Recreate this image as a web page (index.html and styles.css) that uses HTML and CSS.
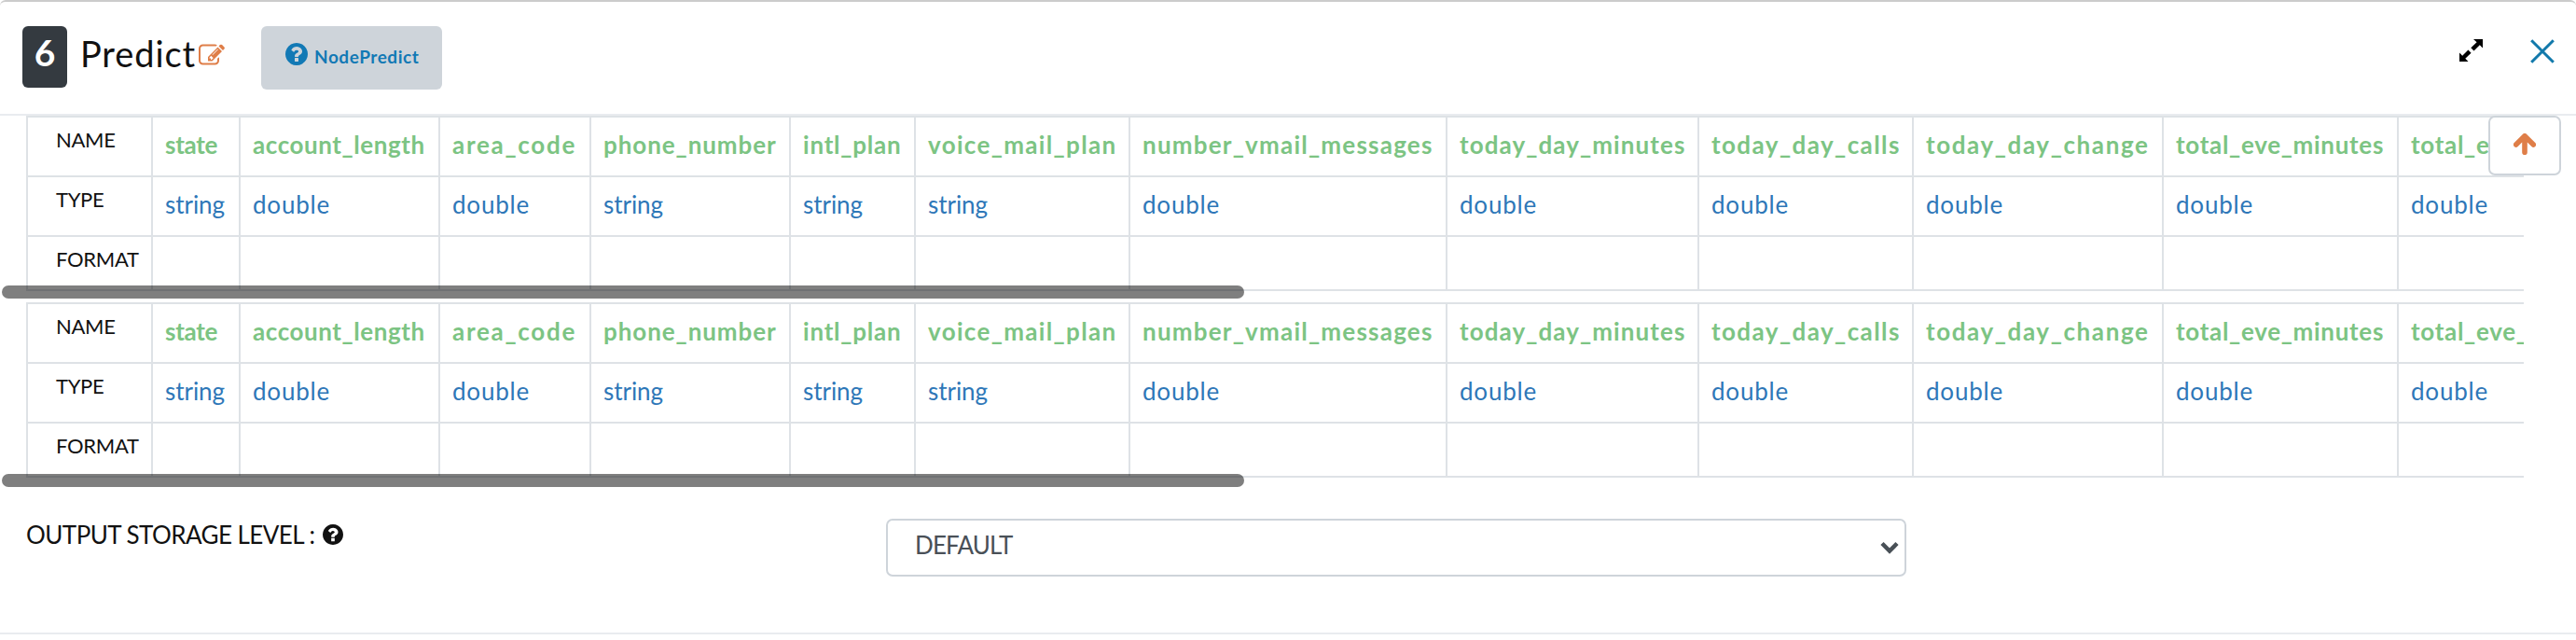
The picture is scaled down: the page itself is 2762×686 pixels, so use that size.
FILE: index.html
```html
<!DOCTYPE html>
<html lang="en">
<head>
<meta charset="utf-8">
<title>Predict</title>
<link rel="stylesheet" href="styles.css">
</head>
<body>
<svg class="defs" width="0" height="0">
  <symbol id="question" viewBox="128 128 1536 1536"><path d="M1024 1376v-192q0-14-9-23t-23-9h-192q-14 0-23 9t-9 23v192q0 14 9 23t23 9h192q14 0 23-9t9-23zm256-672q0-88-55.500-163t-138.500-116-170-41q-243 0-371 213-15 24 8 42l132 100q7 6 19 6 16 0 25-12 53-68 86-92 34-24 86-24 48 0 85.500 26t37.500 59q0 38-20 61t-68 45q-63 28-115.500 86.500t-52.500 125.500v36q0 14 9 23t23 9h192q14 0 23-9t9-23q0-19 21.500-49.500t54.500-49.500q32-18 49-28.500t46-35 44.500-48 28-60.500 12.500-81zm384 192q0 209-103 385.500t-279.500 279.500-385.500 103-385.500-103-279.500-279.500-103-385.500 103-385.500 279.500-279.500 385.500-103 385.500 103 279.500 279.500 103 385.500z"/></symbol>
</svg>
<div class="panel">
  <header class="head">
    <span class="badge">6</span>
    <h1 class="title">Predict</h1>
    <svg class="edit" viewBox="0 112 1792 1440"><path d="M888 1184l116-116-152-152-116 116v56h96v96h56zm440-720q-16-16-33 1l-350 350q-17 17-1 33t33-1l350-350q17-17 1-33zm80 594v190q0 119-84.500 203.500t-203.500 84.500h-832q-119 0-203.500-84.500t-84.500-203.500v-832q0-119 84.500-203.500t203.500-84.500h832q63 0 117 25 15 7 18 23 3 17-9 29l-49 49q-14 14-32 8-23-6-45-6h-832q-66 0-113 47t-47 113v832q0 66 47 113t113 47h832q66 0 113-47t47-113v-126q0-13 9-22l64-64q15-15 35-7t20 29zm-96-738l288 288-672 672h-288v-288zm444 132l-92 92-288-288 92-92q28-28 68-28t68 28l152 152q28 28 28 68t-28 68z"/></svg>
    <a class="node"><svg class="node-icon"><use href="#question"/></svg><span class="node-label">NodePredict</span></a>
    <svg class="expand" viewBox="0 0 25 24"><path d="M15 0h10v9.500l-3.200-3.200-6.300 6.100-3.200-3.200 6.300-6zM0 24v-9.500l3.200 3.200 6.200-6.100 3.200 3.200-6.300 6 3.200 3.200z"/></svg>
    <svg class="close" viewBox="0 0 26 26"><path d="M1.200 1.200l23.600 23.600M24.800 1.200L1.200 24.800"/></svg>
  </header>

  <main class="body">
    <button class="up" type="button"><svg viewBox="0 0 24 23"><path d="M12 20.200V3.500M2.700 12L12 2.800 21.300 12"/></svg></button>

    <section class="schema">
      <div class="clip">
        <table>
          <colgroup><col class="w134"><col class="w94"><col class="w214"><col class="w162"><col class="w214"><col class="w134"><col class="w230"><col class="w340"><col class="w270"><col class="w230"><col class="w268"><col class="w252"><col class="w254"></colgroup>
          <tr class="names"><th>NAME</th><td class="n1">state</td><td class="n2">account_length</td><td class="n3">area_code</td><td class="n4">phone_number</td><td class="n5">intl_plan</td><td class="n6">voice_mail_plan</td><td class="n7">number_vmail_messages</td><td class="n8">today_day_minutes</td><td class="n9">today_day_calls</td><td class="n10">today_day_change</td><td class="n11">total_eve_minutes</td><td class="n11">total_eve_calls</td></tr>
          <tr class="types"><th>TYPE</th><td class="s">string</td><td>double</td><td>double</td><td class="s">string</td><td class="s">string</td><td class="s">string</td><td>double</td><td>double</td><td>double</td><td>double</td><td>double</td><td>double</td></tr>
          <tr class="formats"><th>FORMAT</th><td></td><td></td><td></td><td></td><td></td><td></td><td></td><td></td><td></td><td></td><td></td><td></td></tr>
        </table>
      </div>
      <div class="scroll"></div>
    </section>

    <section class="schema">
      <div class="clip">
        <table>
          <colgroup><col class="w134"><col class="w94"><col class="w214"><col class="w162"><col class="w214"><col class="w134"><col class="w230"><col class="w340"><col class="w270"><col class="w230"><col class="w268"><col class="w252"><col class="w254"></colgroup>
          <tr class="names"><th>NAME</th><td class="n1">state</td><td class="n2">account_length</td><td class="n3">area_code</td><td class="n4">phone_number</td><td class="n5">intl_plan</td><td class="n6">voice_mail_plan</td><td class="n7">number_vmail_messages</td><td class="n8">today_day_minutes</td><td class="n9">today_day_calls</td><td class="n10">today_day_change</td><td class="n11">total_eve_minutes</td><td class="n11">total_eve_calls</td></tr>
          <tr class="types"><th>TYPE</th><td class="s">string</td><td>double</td><td>double</td><td class="s">string</td><td class="s">string</td><td class="s">string</td><td>double</td><td>double</td><td>double</td><td>double</td><td>double</td><td>double</td></tr>
          <tr class="formats"><th>FORMAT</th><td></td><td></td><td></td><td></td><td></td><td></td><td></td><td></td><td></td><td></td><td></td><td></td></tr>
        </table>
      </div>
      <div class="scroll low"></div>
    </section>

    <div class="field">
      <div class="label"><span class="label-text">OUTPUT STORAGE LEVEL :</span><svg class="help"><use href="#question"/></svg></div>
      <div class="select"><span class="value">DEFAULT</span><svg class="chev" viewBox="0 0 20 14"><path d="M2 2.500l8 8 8-8"/></svg></div>
    </div>
  </main>
</div>
</body>
</html>
```
FILE: styles.css
```css
* { box-sizing: border-box; }
body { margin: 0; background: #fff; font-family: Lato, "Open Sans", sans-serif; color: #111; overflow: hidden; }
.defs { position: absolute; }
.panel { height: 680px; border-top: 2px solid #ccc; border-bottom: 2px solid #e9ecef; border-radius: 6px 6px 0 0; }

.head { display: flex; align-items: flex-start; height: 122px; padding: 26px 23px 0 24px; border-bottom: 2px solid #e9ecef; }
.badge { width: 48px; height: 66px; border-radius: 6px; background: #343a40; color: #fff; font-size: 39px; font-weight: 700; line-height: 57px; text-align: center; }
.title { width: 127px; margin: 0 0 0 14px; font-size: 38px; font-weight: 400; line-height: 58px; letter-spacing: .9px; white-space: nowrap; }
.edit { width: 28px; height: 23px; margin-top: 19px; fill: #df7e48; }
.node { display: flex; width: 194px; height: 68px; margin-left: 39px; padding-left: 26px; border-radius: 6px; background: #ced4da; color: #1279b5; }
.node-icon { width: 24px; height: 24px; margin-top: 18px; fill: currentColor; }
.node-label { margin-left: 7px; font-size: 19px; font-weight: 700; line-height: 66px; letter-spacing: .55px; }
.expand { width: 25px; height: 24px; margin: 14px 0 0 auto; fill: #000; }
.close { width: 26px; height: 26px; margin: 14px 0 0 51px; fill: none; stroke: #1279ab; stroke-width: 3; }

.body { position: relative; }
.schema { position: relative; height: 188px; margin-bottom: 12px; padding-left: 28px; }
.clip { width: 2678px; overflow: hidden; }
table { width: 2796px; table-layout: fixed; border-spacing: 0; border-bottom: 2px solid #dee2e6; }
th, td { padding: 0 0 0 13px; border-top: 2px solid #dee2e6; border-left: 2px solid #dee2e6; vertical-align: top; text-align: left; white-space: nowrap; }
th { padding-left: 30px; font-size: 22px; font-weight: 400; line-height: 47px; letter-spacing: -.3px; }
td { font-size: 26px; line-height: 59px; }
.names { height: 64px; color: #7cc483; }
.types { height: 64px; color: #2e77b8; }
.formats { height: 58px; }
.names th, .types th, .formats th { color: #111; }
.names td { font-weight: 700; }
.types td { letter-spacing: .8px; }
.types .s { letter-spacing: -.05px; }
.w134 { width: 134px; }
.w94 { width: 94px; }
.w214 { width: 214px; }
.w162 { width: 162px; }
.w230 { width: 230px; }
.w340 { width: 340px; }
.w270 { width: 270px; }
.w268 { width: 268px; }
.w252 { width: 252px; }
.w254 { width: 254px; }
.n1 { letter-spacing: -.3px; }
.n2 { letter-spacing: .57px; }
.n3 { letter-spacing: 1.72px; }
.n4 { letter-spacing: .93px; }
.n5 { letter-spacing: .78px; }
.n6 { letter-spacing: 1.34px; }
.n7 { letter-spacing: 1.22px; }
.n8 { letter-spacing: 1.09px; }
.n9 { letter-spacing: 1.43px; }
.n10 { letter-spacing: 1.61px; }
.n11 { letter-spacing: .7px; }
.scroll { position: absolute; left: 2px; top: 182px; width: 1332px; height: 14px; border-radius: 7px; background: rgba(0, 0, 0, .5); }
.scroll.low { top: 184px; }

.up { position: absolute; z-index: 1; right: 16px; top: 0; display: flex; align-items: center; justify-content: center; width: 78px; height: 64px; padding: 0 0 3px; border: 2px solid #ced4da; border-radius: 7px; background: #fff; }
.up svg { width: 24px; height: 23px; fill: none; stroke: #df7e48; stroke-width: 5.600; stroke-linecap: round; stroke-linejoin: round; }

.field { display: flex; align-items: flex-start; padding: 32px 0 0 28px; }
.label { display: flex; width: 922px; }
.label-text { width: 318px; font-size: 26px; line-height: 34px; letter-spacing: -.55px; white-space: nowrap; }
.help { width: 22px; height: 22px; margin-top: 6px; fill: #111; }
.select { display: flex; justify-content: space-between; width: 1094px; height: 62px; padding: 0 6px 0 29px; border: 2px solid #ced4da; border-radius: 7px; color: #495057; }
.value { font-size: 26px; line-height: 53px; letter-spacing: -.86px; }
.chev { width: 20px; height: 14px; margin-top: 22px; fill: none; stroke: #495057; stroke-width: 4.500; }
```
